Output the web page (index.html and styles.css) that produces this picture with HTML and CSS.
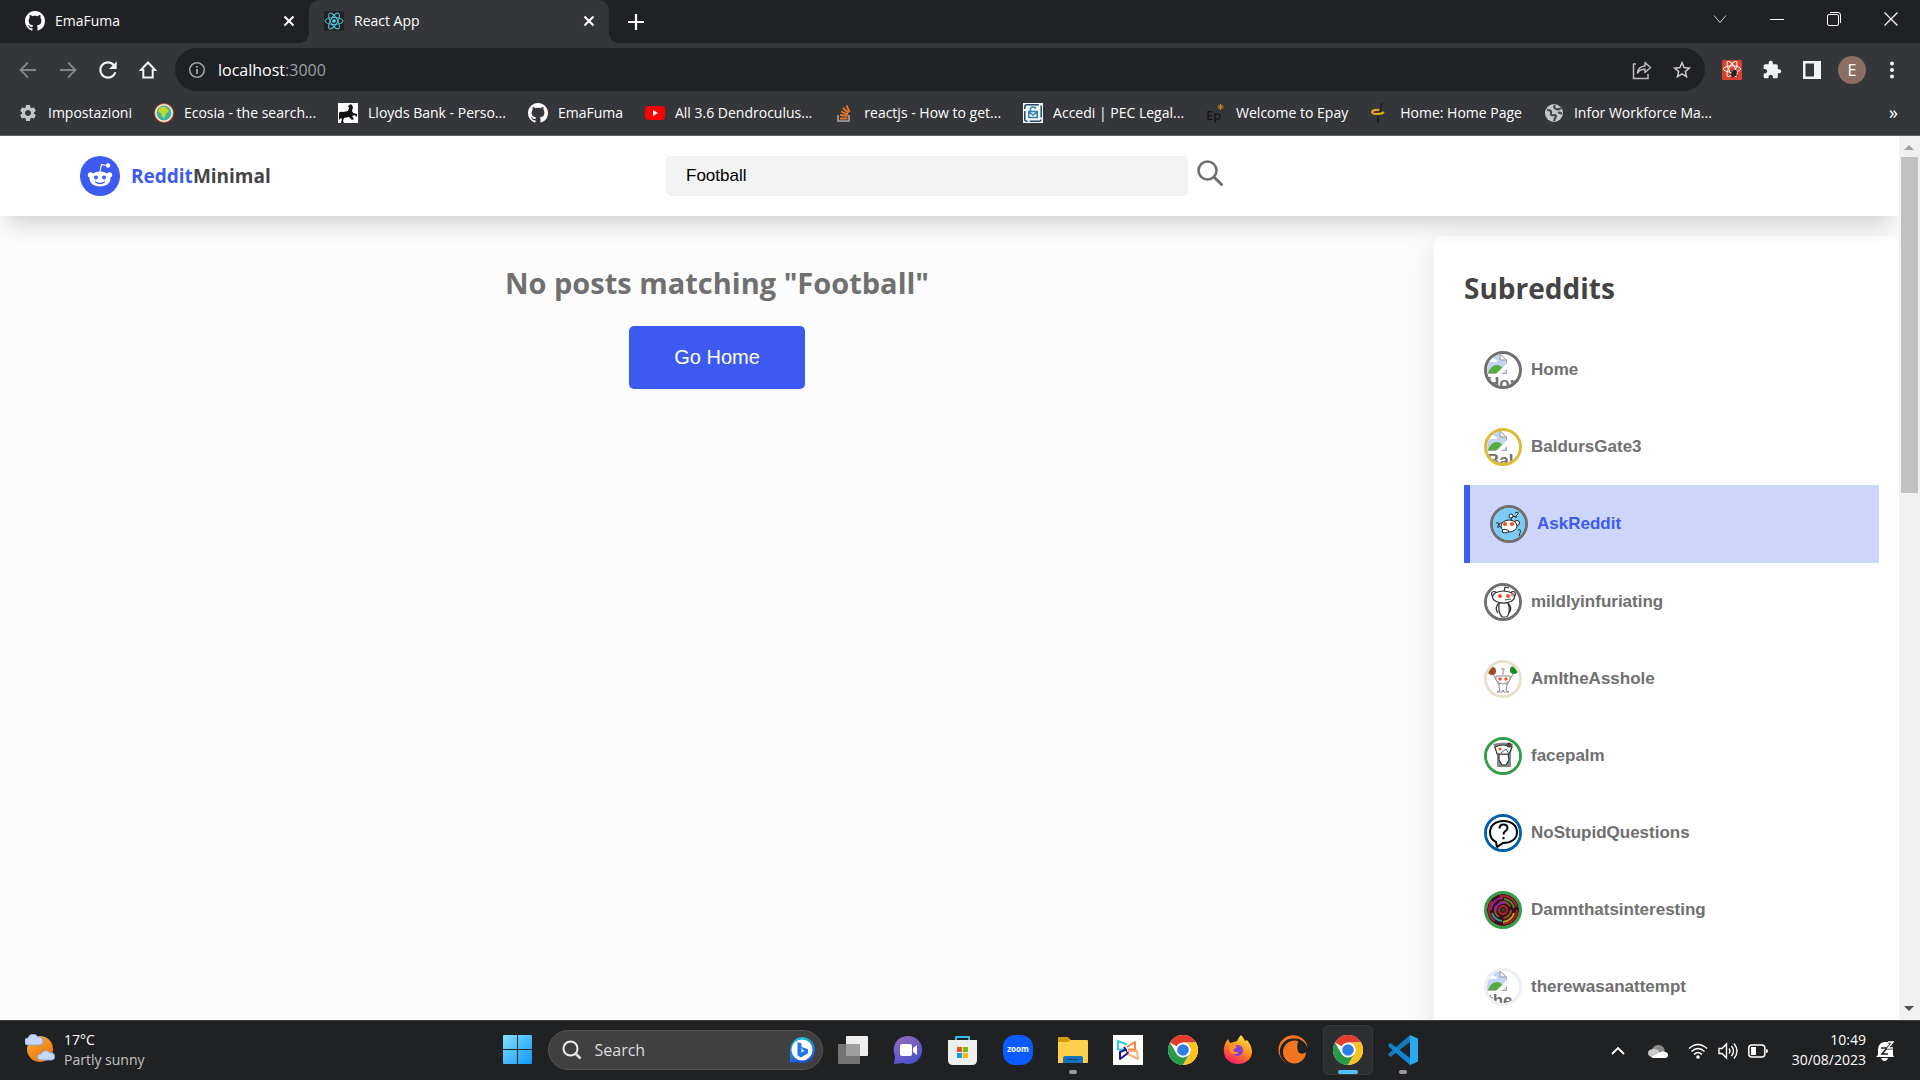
FILE: index.html
```html
<!DOCTYPE html>
<html lang="en">
<head>
<meta charset="utf-8">
<title>React App</title>
<link rel="stylesheet" href="styles.css">
</head>
<body>
<svg class="defs" aria-hidden="true">
  <defs>
    <symbol id="github" viewBox="0 0 16 16"><path fill="#fff" d="M8 0C3.58 0 0 3.58 0 8c0 3.54 2.29 6.53 5.47 7.59.4.07.55-.17.55-.38 0-.19-.01-.82-.01-1.49-2.01.37-2.53-.49-2.69-.94-.09-.23-.48-.94-.82-1.13-.28-.15-.68-.52-.01-.53.63-.01 1.08.58 1.23.82.72 1.21 1.87.87 2.33.66.07-.52.28-.87.51-1.07-1.78-.2-3.64-.89-3.64-3.95 0-.87.31-1.59.82-2.15-.08-.2-.36-1.02.08-2.12 0 0 .67-.21 2.2.82.64-.18 1.32-.27 2-.27.68 0 1.36.09 2 .27 1.53-1.04 2.2-.82 2.2-.82.44 1.1.16 1.92.08 2.12.51.56.82 1.27.82 2.15 0 3.07-1.87 3.75-3.65 3.95.29.25.54.73.54 1.48 0 1.07-.01 1.93-.01 2.2 0 .21.15.46.55.38A8.013 8.013 0 0016 8c0-4.42-3.58-8-8-8z"/></symbol>
    <symbol id="close" viewBox="0 0 12 12"><path d="M1.5 1.5l9 9M10.5 1.5l-9 9" stroke="#fff" stroke-width="2" fill="none"/></symbol>
    <symbol id="chrome" viewBox="0 0 30 30">
      <circle cx="15" cy="15" r="15" fill="#fff"/>
      <path d="M15 15L2 7.5A15 15 0 0 1 28 7.500H15z" fill="#e33b2e"/>
      <path d="M2 7.500A15 15 0 0 0 15 30L21.500 18.750 15 22.500 8.500 18.750z" fill="#289a49"/>
      <path d="M28 7.500A15 15 0 0 1 15 30L21.500 18.750A7.500 7.500 0 0 0 15 7.500z" fill="#fcc31e"/>
      <circle cx="15" cy="15" r="7.500" fill="#fff"/><circle cx="15" cy="15" r="5.800" fill="#2f7de9"/>
    </symbol>
    <symbol id="broken" viewBox="0 0 20 20">
      <path d="M0 0h13l7 6v14H0z" fill="#c3d4f5"/>
      <path d="M2 6q2-4 5-1 3 0 3 3H2z" fill="#fff"/>
      <path d="M1 19q3-8 9-8 4 0 7 5l-3 3z" fill="#54ad3c"/>
      <path d="M0 19.500h20M19.500 6v13.500" fill="none" stroke="#aaa"/>
      <path d="M13 0v6h6.500z" fill="#f4f4f4" stroke="#999"/>
      <path d="M20 9L9 20h5l6-5z" fill="#fff"/>
    </symbol>
  </defs>
</svg>

<div class="screen">
  <header class="browser">
    <div class="tabstrip">
      <div class="tab">
        <svg class="icon20"><use href="#github"/></svg>
        <span class="tab-title">EmaFuma</span>
        <button class="plain" aria-label="Close tab"><svg class="icon12"><use href="#close"/></svg></button>
      </div>
      <div class="tab active">
        <svg class="icon20" viewBox="0 0 20 20"><rect width="20" height="20" rx="2" fill="#222"/><g fill="none" stroke="#4fc3dc"><ellipse cx="10" cy="10" rx="9" ry="3.500"/><ellipse cx="10" cy="10" rx="9" ry="3.500" transform="rotate(60 10 10)"/><ellipse cx="10" cy="10" rx="9" ry="3.500" transform="rotate(120 10 10)"/></g><circle cx="10" cy="10" r="1.800" fill="#61dafb"/></svg>
        <span class="tab-title">React App</span>
        <button class="plain" aria-label="Close tab"><svg class="icon12"><use href="#close"/></svg></button>
      </div>
      <button class="plain new-tab" aria-label="New tab"><svg class="icon16" viewBox="0 0 16 16"><path d="M8 0v16M0 8h16" stroke="#fff" stroke-width="2.200"/></svg></button>
      <div class="window-controls">
        <button class="plain" aria-label="Search tabs"><svg class="icon14" viewBox="0 0 14 14"><path d="M1 3.500l6 7 6-7" fill="none" stroke="#ccc"/></svg></button>
        <button class="plain" aria-label="Minimise"><svg class="icon14" viewBox="0 0 14 14"><path d="M0 7.500h14" stroke="#fff"/></svg></button>
        <button class="plain" aria-label="Restore"><svg class="icon14" viewBox="0 0 14 14"><rect x=".5" y="2.500" width="11" height="11" rx="1.500" fill="none" stroke="#fff"/><path d="M3 .5h8q2.500 0 2.500 2.500v8" fill="none" stroke="#fff"/></svg></button>
        <button class="plain" aria-label="Close"><svg class="icon14" viewBox="0 0 14 14"><path d="M.5.5l13 13M13.500.5l-13 13" stroke="#fff" stroke-width="1.200"/></svg></button>
      </div>
    </div>

    <div class="toolbar">
      <div class="tools">
        <button class="plain" aria-label="Back"><svg class="icon18" viewBox="0 0 18 18"><path d="M17 9H2M9 1.500L1.500 9 9 16.500" fill="none" stroke="#85868a" stroke-width="1.800"/></svg></button>
        <button class="plain" aria-label="Forward"><svg class="icon18" viewBox="0 0 18 18"><path d="M1 9h15M9 1.500L16.500 9 9 16.500" fill="none" stroke="#85868a" stroke-width="1.800"/></svg></button>
        <button class="plain" aria-label="Reload"><svg class="icon26" viewBox="0 0 24 24"><path fill="#f1f3f4" d="M17.650 6.350C16.200 4.900 14.210 4 12 4c-4.420 0-7.990 3.580-7.990 8s3.570 8 7.990 8c3.730 0 6.840-2.550 7.730-6h-2.080c-.82 2.330-3.040 4-5.650 4-3.310 0-6-2.690-6-6s2.690-6 6-6c1.660 0 3.140.69 4.220 1.780L13 11h7V4l-2.350 2.350z"/></svg></button>
        <button class="plain" aria-label="Home page"><svg class="icon18" viewBox="0 0 18 18"><path d="M9 1.500L1.800 9h2.500v7.500h9.400V9h2.500z" fill="none" stroke="#f1f3f4" stroke-width="2"/></svg></button>
      </div>
      <div class="omnibox">
        <svg class="icon18" viewBox="0 0 18 18"><circle cx="9" cy="9" r="7.300" fill="none" stroke="#9aa0a6" stroke-width="1.600"/><path d="M9 8v5M9 5v1.800" stroke="#9aa0a6" stroke-width="1.800"/></svg>
        <span class="url">localhost<span class="port">:3000</span></span>
        <button class="plain" aria-label="Share"><svg class="icon20" viewBox="0 0 20 20"><path d="M4 4H1.500v14.500H16V14" fill="none" stroke="#bbb" stroke-width="1.500"/><path d="M5.500 13Q6 6.500 13 6V2.500l5.500 5L13 12.500V9.200Q8 9 5.500 13z" fill="none" stroke="#bbb" stroke-width="1.500" stroke-linejoin="round"/></svg></button>
        <button class="plain" aria-label="Bookmark"><svg class="icon22" viewBox="0 0 24 24"><path fill="#d0d0d0" d="M22 9.240l-7.190-.62L12 2 9.190 8.630 2 9.240l5.460 4.730L5.820 21 12 17.270 18.180 21l-1.630-7.030L22 9.240zM12 15.400l-3.760 2.270 1-4.280-3.320-2.880 4.380-.38L12 6.100l1.710 4.040 4.380.38-3.320 2.880 1 4.280L12 15.400z"/></svg></button>
      </div>
      <div class="tools">
        <button class="plain" aria-label="React Developer Tools"><svg class="icon20" viewBox="0 0 20 20"><rect width="20" height="20" rx="1" fill="#d9412f"/><g fill="none" stroke="#fff"><ellipse cx="10" cy="9" rx="8.500" ry="3.200"/><ellipse cx="10" cy="9" rx="8.500" ry="3.200" transform="rotate(60 10 9)"/><ellipse cx="10" cy="9" rx="8.500" ry="3.200" transform="rotate(120 10 9)"/></g><ellipse cx="12" cy="13.500" rx="2.500" ry="3.500" fill="#222" transform="rotate(25 12 13.500)"/><path d="M8 11l8 5M8 15l7-4M10 18l4-8" stroke="#222"/></svg></button>
        <button class="plain" aria-label="Extensions"><svg class="icon20" viewBox="0 0 24 24"><path fill="#f1f3f4" d="M20.500 11H19V7c0-1.100-.9-2-2-2h-4V3.500C13 2.120 11.880 1 10.500 1S8 2.120 8 3.500V5H4c-1.100 0-1.990.9-1.990 2v3.800H3.500c1.490 0 2.700 1.210 2.700 2.700s-1.210 2.700-2.700 2.700H2V20c0 1.100.9 2 2 2h3.800v-1.500c0-1.490 1.210-2.700 2.700-2.700 1.490 0 2.700 1.210 2.700 2.700V22H17c1.100 0 2-.9 2-2v-4h1.500c1.380 0 2.500-1.120 2.500-2.500S21.880 11 20.500 11z"/></svg></button>
        <button class="plain" aria-label="Side panel"><svg class="icon18" viewBox="0 0 18 18"><path fill="#f1f3f4" fill-rule="evenodd" d="M0 0h18v18H0zM2.500 2.500v13H11v-13z"/></svg></button>
        <button class="plain" aria-label="Profile"><span class="avatar">E</span></button>
        <button class="plain" aria-label="Menu"><svg class="icon18" viewBox="0 0 18 18"><g fill="#f1f3f4"><circle cx="9" cy="2.500" r="2"/><circle cx="9" cy="9" r="2"/><circle cx="9" cy="15.500" r="2"/></g></svg></button>
      </div>
    </div>

    <nav class="bookmarks">
      <a href="#"><svg class="icon20" viewBox="0 0 24 24"><path fill="#c4c7cc" d="M19.140 12.940c.04-.3.06-.61.06-.94 0-.32-.02-.64-.07-.94l2.030-1.580c.18-.14.23-.41.12-.61l-1.920-3.320c-.12-.22-.37-.29-.59-.22l-2.390.96c-.5-.38-1.030-.7-1.620-.94l-.36-2.540c-.04-.24-.24-.41-.48-.41h-3.840c-.24 0-.43.17-.47.41l-.36 2.540c-.59.24-1.130.57-1.620.94l-2.390-.96c-.22-.08-.47 0-.59.22L2.740 8.870c-.12.21-.08.47.12.61l2.030 1.580c-.05.3-.09.63-.09.94s.02.64.07.94l-2.030 1.580c-.18.14-.23.41-.12.61l1.920 3.320c.12.22.37.29.59.22l2.390-.96c.5.38 1.030.7 1.620.94l.36 2.540c.05.24.24.41.48.41h3.840c.24 0 .44-.17.47-.41l.36-2.540c.59-.24 1.130-.56 1.620-.94l2.390.96c.22.08.47 0 .59-.22l1.920-3.320c.12-.22.07-.47-.12-.61l-2.010-1.580zM12 15.600c-1.980 0-3.600-1.620-3.600-3.600s1.620-3.600 3.600-3.600 3.600 1.620 3.600 3.600-1.620 3.600-3.600 3.600z"/></svg><span>Impostazioni</span></a>
      <a href="#"><svg class="icon20" viewBox="0 0 20 20"><circle cx="10" cy="10" r="9.200" fill="#3bb3a8" stroke="#e2583e" stroke-width="1.200"/><circle cx="10" cy="10" r="8.200" fill="none" stroke="#f6efc9" stroke-width="1.600"/><path d="M5 6q4-4 8-1l2 4-3 1-1 5-3-1-1-4-3-1z" fill="#c6d82f"/></svg><span>Ecosia - the search...</span></a>
      <a href="#"><svg class="icon20" viewBox="0 0 20 20"><rect width="20" height="20" fill="#fff"/><path d="M1 10q1-2 4-1l5-1 1-3-1-2 3-2 2 3-1 4 1 2 4 1v2l-1 1-1-2-3 1 2 3-2 1-3-3-5 1-1 3 1 2H3l1-4-1-1-2 2z" fill="#111"/></svg><span>Lloyds Bank - Perso...</span></a>
      <a href="#"><svg class="icon20"><use href="#github"/></svg><span>EmaFuma</span></a>
      <a href="#"><svg class="icon20" viewBox="0 0 20 20"><rect y="3" width="20" height="14" rx="4" fill="#f00"/><path d="M8 7l5 3-5 3z" fill="#fff"/></svg><span>All 3.6 Dendroculus...</span></a>
      <a href="#"><svg class="icon20" viewBox="0 0 20 20"><path d="M4 12v6h11v-6" fill="none" stroke="#a9a9a9" stroke-width="1.600"/><path d="M6 15.500h7.500M6.200 12l7.300 1M7 8.500l6.800 3M9 5l5.500 5M12.500 2.500l3 6.500" stroke="#e87722" stroke-width="1.800"/></svg><span>reactjs - How to get...</span></a>
      <a href="#"><svg class="icon20" viewBox="0 0 20 20"><rect width="20" height="20" fill="#f3f8fb"/><rect x="1.800" y="1.800" width="16.400" height="16.400" rx="2" fill="none" stroke="#23466b" stroke-width="1.500" stroke-dasharray="12 2"/><path d="M7.500 8V6q0-2 2.500-2t2.500 2M5.800 8.500h8.500v6H5.800zM6 9l4 3 4-3" fill="none" stroke="#2c86ad" stroke-width="1.500"/></svg><span>Accedi | PEC Legal...</span></a>
      <a href="#"><svg class="icon20" viewBox="0 0 20 20"><text class="ep" x="0" y="17">Ep</text><path d="M14.500 1v6M11.500 4h6M12.500 2l4 4M16.500 2l-4 4" stroke="#c98a20"/></svg><span>Welcome to Epay</span></a>
      <a href="#"><svg class="icon20" viewBox="0 0 20 20"><path d="M10 7Q3 6 2 9q0 2 5 2 5 0 7-2" fill="none" stroke="#e5b211" stroke-width="1.800"/><path d="M12 0l-2 9M8 13v7" stroke="#202124" stroke-width="2"/></svg><span>Home: Home Page</span></a>
      <a href="#"><svg class="icon20" viewBox="0 0 20 20"><circle cx="10" cy="10" r="9" fill="#c4c7cc"/><path d="M3 7q5 0 4 3t4 2q2 1 0 3l-1 3M11 2q-2 3 1 4t5-1M14 10q2-1 4 1" fill="none" stroke="#45474b" stroke-width="2.200"/></svg><span>Infor Workforce Ma...</span></a>
      <button class="plain more" aria-label="More bookmarks"><span>»</span></button>
    </nav>
  </header>

  <div class="viewport">
    <div class="page">
      <header class="site-header">
        <a class="brand" href="#">
          <svg class="logo" viewBox="0 0 40 40"><circle cx="20" cy="20" r="20" fill="#3d5af1"/><ellipse cx="20" cy="23" rx="10.500" ry="7.500" fill="#fff"/><circle cx="10.500" cy="19" r="2.700" fill="#fff"/><circle cx="29.500" cy="19" r="2.700" fill="#fff"/><circle cx="28" cy="9.500" r="2.200" fill="#fff"/><path d="M20 16l1.500-7.500 5 1" fill="none" stroke="#fff" stroke-width="1.200"/><circle cx="16" cy="21.500" r="1.900" fill="#3d5af1"/><circle cx="24" cy="21.500" r="1.900" fill="#3d5af1"/><path d="M15.500 26q4.500 3 9 0" fill="none" stroke="#3d5af1" stroke-width="1.300" stroke-linecap="round"/></svg>
          <span><span class="brand-blue">Reddit</span>Minimal</span>
        </a>
        <form class="search">
          <input type="text" value="Football" aria-label="Search posts">
          <button type="button" class="plain" aria-label="Search"><svg class="icon26" viewBox="0 0 26 26"><circle cx="10.500" cy="10.500" r="9" fill="none" stroke="#707070" stroke-width="2.600"/><path d="M17 17l7.500 7.500" stroke="#707070" stroke-width="3" stroke-linecap="round"/></svg></button>
        </form>
      </header>
      <div class="columns">
        <main class="results">
          <h2>No posts matching "Football"</h2>
          <button class="go-home">Go Home</button>
        </main>
        <aside class="subreddits">
          <h2>Subreddits</h2>
          <ul>
            <li><button class="sub"><span class="pic grey"><svg class="icon20"><use href="#broken"/></svg><span>Hor</span></span>Home</button></li>
            <li><button class="sub"><span class="pic gold"><svg class="icon20"><use href="#broken"/></svg><span>Bal</span></span>BaldursGate3</button></li>
            <li><button class="sub selected"><span class="pic grey"><svg class="art" viewBox="0 0 32 32"><rect width="32" height="32" fill="#7dcbf7"/><g fill="#fff" stroke="#222"><path d="M18 12l1-4 4 1" fill="none"/><circle cx="18" cy="8" r="2"/><circle cx="8" cy="17" r="2"/><circle cx="24" cy="15" r="2.500"/><ellipse cx="16" cy="18" rx="8" ry="6"/><path d="M9 24q1-4 5-2l2 1q-2 3-7 1z"/></g><circle cx="12" cy="16" r="2" fill="#f04b23"/><circle cx="19" cy="16" r="2" fill="#f04b23"/><g fill="none" stroke="#222"><path d="M22 5q4-2 3 1l-2 2v2M3 15q4-1 2 3v2M25 22q4-1 2 3l-1 3"/></g></svg></span>AskReddit</button></li>
            <li><button class="sub"><span class="pic grey"><svg class="art" viewBox="0 0 32 32"><rect width="32" height="32" fill="#fff"/><g fill="#fff" stroke="#333" stroke-width="1.200"><path d="M17 6l1-5 4 1" fill="none"/><path d="M12 17q-5 5-1 10M21 17q5 5 1 10M12 17q-1 10 3 14h5q4-6 1-14z"/><circle cx="7" cy="8" r="2.500"/><circle cx="26" cy="8" r="2.500"/><ellipse cx="16.500" cy="11" rx="11" ry="6"/></g><circle cx="13" cy="10" r="1.900" fill="#f04b23"/><circle cx="21" cy="10" r="1.900" fill="#f04b23"/><circle cx="25" cy="9" r="1.600" fill="#f49b91"/><path d="M18 14l6-1" stroke="#555"/></svg></span>mildlyinfuriating</button></li>
            <li><button class="sub"><span class="pic sand"><svg class="art" viewBox="0 0 32 32"><rect width="32" height="32" fill="#fff"/><g fill="#fff" stroke="#888"><path d="M16 12V8q3-3-2-2M6 11l6 11M26 11l-6 11"/><path d="M12 20q0 6 1 7l-3 2h5l1-2 1 2h5l-3-2q1-4 1-7z"/><path d="M9 13h14v4q-7 8-14 0z"/></g><circle cx="5" cy="8" r="4" fill="#9c4d28"/><circle cx="27" cy="7" r="4" fill="#148c23"/><circle cx="13" cy="16" r="1.800" fill="#f05a30"/><circle cx="19" cy="16" r="1.800" fill="#f05a30"/></svg></span>AmItheAsshole</button></li>
            <li><button class="sub"><span class="pic green"><svg class="art" viewBox="0 0 32 32"><rect width="32" height="32" fill="#fff"/><path d="M6 4q10-3 20 0l-2 9v14H10V13z" fill="#888"/><g fill="#fff" stroke="#333" stroke-width="1.200"><path d="M12 14h9l1 6-3 5h-4l-3-5z"/><path d="M8 7q8-4 17 0l-3 7H10z"/></g><circle cx="13" cy="9" r="1.600" fill="#f05a30"/><circle cx="22" cy="5" r="2.500" fill="#444"/><path d="M14 13l5-4 3 5" fill="none" stroke="#555"/></svg></span>facepalm</button></li>
            <li><button class="sub"><span class="pic blue"><svg class="art" viewBox="0 0 32 32"><rect width="32" height="32" fill="#fff"/><path d="M9 25Q3 22 3 15.500C3 9 8 4 16.500 4S30 9 30 15.500 24 26 16 26l-6 4z" fill="#fff" stroke="#000" stroke-width="2"/><path d="M12.500 11.500q0-4 4-4t4 3.500q0 2-2.500 3.500-1.500 1-1.500 3M16.500 20v2.200" fill="none" stroke="#000" stroke-width="2"/></svg></span>NoStupidQuestions</button></li>
            <li><button class="sub"><span class="pic green"><svg class="art" viewBox="0 0 32 32"><rect width="32" height="32" fill="#37101c"/><g fill="none" stroke-width="2"><circle cx="16" cy="16" r="14" stroke="#a82424" stroke-dasharray="22 9"/><path d="M4 16a12 12 0 0 1 12-12" stroke="#a3208a"/><path d="M17 5a11 11 0 0 1 10 9" stroke="#3f8d25"/><path d="M27 19a12 12 0 0 1-11 9" stroke="#c7a51d"/><path d="M5 19a12 12 0 0 0 10 8" stroke="#1aa3a8"/><circle cx="16" cy="16" r="8" stroke="#8d5a16" stroke-dasharray="12 5"/><path d="M9 17a7 7 0 0 1 9-8" stroke="#8326b0"/><circle cx="16" cy="16" r="4" stroke="#b3222e"/></g><circle cx="16" cy="16" r="2" fill="#254c22"/></svg></span>Damnthatsinteresting</button></li>
            <li><button class="sub"><span class="pic pale"><svg class="icon20"><use href="#broken"/></svg><span>the</span></span>therewasanattempt</button></li>
          </ul>
        </aside>
      </div>
    </div>
    <div class="scrollbar">
      <svg class="arrow" viewBox="0 0 20 20"><path d="M5 14l5-5 5 5z" fill="#a3a3a3"/></svg>
      <div class="thumb"></div>
      <svg class="arrow" viewBox="0 0 20 20"><path d="M5 6l5 5 5-5z" fill="#505050"/></svg>
    </div>
  </div>

  <footer class="taskbar">
    <div class="weather">
      <svg class="icon30" viewBox="0 0 30 30"><defs><linearGradient id="sun" x2="0.6" y2="1"><stop stop-color="#f5b82e"/><stop offset="1" stop-color="#f0700f"/></linearGradient></defs><circle cx="15" cy="15" r="13" fill="url(#sun)"/><path d="M3 11a3.500 3.500 0 0 1 0-7 5.500 5.500 0 0 1 10-1 4 4 0 0 1 2 8z" fill="#c9d7f8" stroke="#8aa4e3"/><path d="M15 26a3 3 0 0 1 1-6 5 5 0 0 1 9-1 3.500 3.500 0 0 1 2 7z" fill="#c9d7f8" stroke="#8aa4e3"/></svg>
      <div class="lines"><div>17°C</div><div class="dim">Partly sunny</div></div>
    </div>
    <div class="apps">
      <button class="plain app" aria-label="Start"><svg class="icon30" viewBox="0 0 30 30"><defs><linearGradient id="win" x2="1" y2="1"><stop stop-color="#84e0ff"/><stop offset="1" stop-color="#0f97f6"/></linearGradient></defs><path fill="url(#win)" d="M0 1q0-1 1-1h13v14H0zM15 0h13q1 0 1 1v13H15zM0 15h14v14H1q-1 0-1-1zM15 15h14v13q0 1-1 1H15z"/></svg></button>
      <button class="plain task-search"><svg class="icon20" viewBox="0 0 20 20"><circle cx="8.500" cy="8.500" r="7" fill="none" stroke="#eee" stroke-width="2"/><path d="M13.500 13.500l5 5" stroke="#ddd" stroke-width="2.600"/></svg><span>Search</span><svg class="icon26" viewBox="0 0 26 26"><defs><linearGradient id="bing" x2="0.300" y2="1"><stop stop-color="#22c9dc"/><stop offset="1" stop-color="#1a55d8"/></linearGradient></defs><path d="M13 0a13 13 0 1 1-5 25l-7 1V14A13 13 0 0 1 13 0z" fill="url(#bing)"/><circle cx="13" cy="13" r="10.500" fill="#fff"/><path d="M8.500 5l4 1.500v9l3-1.800-2-1-1-3 6.500 2.500v4L12 20.500l-3.500-2z" fill="#2277e8"/></svg></button>
      <button class="plain app" aria-label="Task view"><svg class="icon30" viewBox="0 0 30 30"><rect x="8" y="1" width="22" height="20" rx="1" fill="#eee"/><rect y="9" width="22" height="20" rx="1" fill="#8a8a8a" opacity=".8"/></svg></button>
      <button class="plain app" aria-label="Chat"><svg class="icon30" viewBox="0 0 30 30"><defs><linearGradient id="chat" x2="0.500" y2="1"><stop stop-color="#9b6bbf"/><stop offset="1" stop-color="#4b53c8"/></linearGradient></defs><path d="M15 1a14 14 0 1 1-5 27l-9 1 1-8A14 14 0 0 1 15 1z" fill="url(#chat)"/><rect x="7" y="9" width="12" height="12" rx="2" fill="#fff"/><path d="M20 13l4-3v10l-4-3z" fill="#fff"/></svg></button>
      <button class="plain app" aria-label="Store"><svg class="icon30" viewBox="0 0 30 30"><path d="M8 7V2h13v5" fill="none" stroke="#34b8e8" stroke-width="2"/><path d="M0 5h29v20q0 5-5 5H5q-5 0-5-5z" fill="#efefef"/><path d="M9 12h5v5H9z" fill="#f04f23"/><path d="M15 12h5v5h-5z" fill="#7fb900"/><path d="M9 18h5v5H9z" fill="#00a3ee"/><path d="M15 18h5v5h-5z" fill="#feb800"/></svg></button>
      <button class="plain app" aria-label="Zoom"><svg class="icon30" viewBox="0 0 30 30"><rect width="30" height="30" rx="12" fill="#0b5cff"/><text class="zoom-word" x="15" y="17" text-anchor="middle">zoom</text></svg></button>
      <button class="plain app running" aria-label="File Explorer"><svg class="icon30" viewBox="0 0 30 30"><path d="M0 3q0-1 1-1h9l3 3h-1v5H0z" fill="#d99a07"/><path d="M0 7h10l2-2h17q1 0 1 1v21q0 1-1 1H0z" fill="#fdcf4a"/><path d="M5 28v-5q0-2 2-2h16q2 0 2 2v5z" fill="#1272c0"/><path d="M9 24.500h12" stroke="#0b4a80"/></svg></button>
      <button class="plain app" aria-label="Capture"><svg class="icon30" viewBox="0 0 30 30"><rect width="30" height="30" fill="#fff"/><g fill="none" stroke-width="2" stroke-linejoin="round"><path d="M14 14.500H5V6l9 3.500" stroke="#2bd3df"/><path d="M14 12l8-5v7.500h-7" stroke="#f58a3c"/><path d="M12 15l-5 2v7l8-6-4-6" stroke="#1a1a8c"/><path d="M14 16h10l1 8-10-5" stroke="#f9b277"/></g></svg></button>
      <button class="plain app" aria-label="Chrome"><svg class="icon30"><use href="#chrome"/></svg></button>
      <button class="plain app" aria-label="Firefox"><svg class="icon30" viewBox="0 0 30 30"><defs><linearGradient id="fox" x1="0.800" x2="0.300" y2="1"><stop stop-color="#fff14a"/><stop offset=".5" stop-color="#ff8c1e"/><stop offset="1" stop-color="#f5156c"/></linearGradient></defs><path d="M18 0q3 3 4 6l2-1q5 6 5 12a14 12 0 0 1-28 0Q0 10 5 4l2 4 4-1 3-1q2-4 4-6z" fill="url(#fox)"/><circle cx="14.500" cy="15.500" r="5.500" fill="#8440d8"/><path d="M6 10q5-1 8 2-2 1-4 3 2 3 6 2-3 4-8 1-3-4-2-8z" fill="#ff9420"/></svg></button>
      <button class="plain app" aria-label="Crunchyroll"><svg class="icon30" viewBox="0 0 30 30"><path d="M14 29.500A14.700 14.700 0 1 1 29.700 13q-4-10-14-9.500A12 12 0 0 0 14 29.500z" fill="#f47521"/><path d="M20 6a11.500 11.500 0 1 0 8 11q-3 3-6.500 1T20 6z" fill="#f47521"/></svg></button>
      <button class="plain app current" aria-label="Chrome, running"><svg class="icon30"><use href="#chrome"/></svg></button>
      <button class="plain app running" aria-label="Visual Studio Code"><svg class="icon30" viewBox="0 0 30 30"><path d="M22 7L2.500 22 .5 20.500v-2L22 0z" fill="#1479bd"/><path d="M22 23L2.500 8 .5 9.500v2L22 30z" fill="#1186cf"/><path d="M22 0l8 3.500v23L22 30z" fill="#2aa9f1"/></svg></button>
    </div>
    <div class="tray">
      <button class="plain tray-item" aria-label="Hidden icons"><svg class="icon14" viewBox="0 0 14 14"><path d="M1 10l6-6 6 6" fill="none" stroke="#fff" stroke-width="1.800"/></svg></button>
      <button class="plain tray-item" aria-label="OneDrive"><svg class="icon20" viewBox="0 0 20 20"><path d="M4 10Q5 3 11 4q5 0 6 7z" fill="#8b8b8b"/><path d="M4 16q-4-1-4-4t4-4q4-1 7 2l5 6z" fill="#c8c8c8"/><path d="M3 16l8-4q3-3 6-1 3 0 3 3 0 3-3 3H5z" fill="#fff"/></svg></button>
      <button class="plain system" aria-label="Network, volume and battery">
        <svg class="icon20" viewBox="0 0 20 20"><g fill="none" stroke="#fff" stroke-width="1.500"><path d="M1 7.500q9-8 18 0M3.500 10.500q6.500-6 13 0M6 13.500q4-4 8 0"/></g><circle cx="10" cy="16" r="1.800" fill="#fff"/></svg>
        <svg class="icon20" viewBox="0 0 20 20"><g fill="none" stroke="#fff" stroke-width="1.400"><path d="M1 7.500h3L8.500 3v14L4 12.500H1zM11 7.500q2 2.500 0 5M13.500 5q4 5 0 10M16 2.500q6 7.500 0 15"/></g></svg>
        <svg class="icon20" viewBox="0 0 20 20"><rect x=".8" y="4" width="16" height="12" rx="3" fill="none" stroke="#fff" stroke-width="1.500"/><path d="M3 6h5v8H3zM18 8q2 0 2 2t-2 2z" fill="#fff"/></svg>
      </button>
      <div class="clock lines"><div>10:49</div><div>30/08/2023</div></div>
      <svg class="icon20" viewBox="0 0 20 20"><path d="M0 16l2-2V8q1-7 7-7h5v3l3 3v7l1 2zM5 17h7q-1 3-3.500 3T5 17z" fill="#fff"/><path d="M5 7h6l-5 6h6" fill="none" stroke="#202124" stroke-width="1.600"/><path d="M12 1h5l-5 6h5" fill="none" stroke="#202124" stroke-width="3"/><path d="M12 1h5l-5 6h5" fill="none" stroke="#fff" stroke-width="1.400"/></svg>
    </div>
  </footer>
</div>
</body>
</html>
```
FILE: styles.css
```css
* { box-sizing: border-box; }

body {
  margin: 0;
  font-family: "Open Sans", "Noto Sans", sans-serif;
  font-size: 14px;
}

svg { display: block; flex: none; }
.defs { position: absolute; width: 0; height: 0; }

.icon12 { width: 12px; height: 12px; }
.icon14 { width: 14px; height: 14px; }
.icon16 { width: 16px; height: 16px; }
.icon18 { width: 18px; height: 18px; }
.icon20 { width: 20px; height: 20px; }
.icon22 { width: 22px; height: 22px; }
.icon26 { width: 26px; height: 26px; }
.icon30 { width: 30px; height: 30px; }

.plain {
  display: flex;
  align-items: center;
  justify-content: center;
  padding: 0;
  border: 0;
  background: none;
  color: inherit;
  font: inherit;
}

.screen {
  display: flex;
  flex-direction: column;
  height: 100vh;
  overflow: hidden;
}

/* Browser window */
.browser {
  flex: none;
  background: #35363a;
  border-bottom: 1px solid #5f6063;
  color: #fff;
}

.tabstrip {
  display: flex;
  height: 43px;
  padding-left: 9px;
  background: #202124;
}

.tab {
  position: relative;
  display: flex;
  align-items: center;
  gap: 10px;
  width: 300px;
  padding: 0 14px 1px 16px;
}

.tab.active {
  padding-left: 15px;
  background: #35363a;
  border-radius: 10px 10px 0 0;
}

.tab.active::before,
.tab.active::after {
  content: "";
  position: absolute;
  bottom: 0;
  width: 10px;
  height: 10px;
}

.tab.active::before {
  right: 100%;
  background: radial-gradient(circle at 0 0, transparent 10px, #35363a 10px);
}

.tab.active::after {
  left: 100%;
  background: radial-gradient(circle at 100% 0, transparent 10px, #35363a 10px);
}

.tab-title { flex: 1; padding-bottom: 1px; }

.new-tab { width: 54px; }

.window-controls {
  display: flex;
  height: 37px;
  margin: 0 1px 0 auto;
}

.window-controls .plain { width: 57px; }

.toolbar {
  display: flex;
  align-items: center;
  gap: 7px;
  height: 53px;
  padding: 0 8px;
}

.tools { display: flex; }
.tools .plain { width: 40px; height: 40px; }

.omnibox {
  display: flex;
  flex: 1;
  align-items: center;
  height: 43px;
  padding: 0 3px 0 13px;
  border-radius: 22px;
  background: #202124;
}

.omnibox .plain { width: 40px; }

.url {
  flex: 1;
  margin-left: 12px;
  font-size: 16px;
}

.port { color: #9aa0a6; }

.avatar {
  width: 28px;
  height: 28px;
  border-radius: 50%;
  background: #8d6e63;
  font-size: 16px;
  line-height: 28px;
  text-align: center;
}

.bookmarks {
  display: flex;
  align-items: center;
  gap: 22px;
  height: 39px;
  padding: 0 18px 5px;
}

.bookmarks a {
  display: flex;
  align-items: center;
  gap: 10px;
  color: #fff;
  text-decoration: none;
  white-space: nowrap;
}

.bookmarks span { padding-bottom: 2px; }

.more { margin-left: auto; font-size: 18px; }
.more span { margin-right: 4px; }

.ep { font-size: 13px; font-weight: 600; fill: #17181a; }

/* Web page */
.viewport {
  display: flex;
  flex: 1;
  min-height: 0;
  overflow: hidden;
}

.page {
  flex: 1;
  min-width: 0;
  overflow: hidden;
  background: #fcfcfc;
}

.site-header {
  position: relative;
  display: grid;
  grid-template-columns: 1fr 557px 1fr;
  align-items: center;
  height: 80px;
  padding: 0 90px 0 80px;
  background: #fff;
  box-shadow: 0 14px 24px -8px rgba(0, 0, 0, .2);
}

.brand {
  display: flex;
  align-items: center;
  gap: 11px;
  color: #444;
  font-size: 19px;
  font-weight: 700;
  text-decoration: none;
}

.logo { width: 40px; height: 40px; }
.brand-blue { color: #3d5af1; }

.search { display: flex; gap: 9px; }

.search input {
  flex: 1;
  min-width: 0;
  height: 40px;
  padding: 0 20px;
  border: 0;
  border-radius: 5px;
  background: #f3f3f3;
  color: #000;
  font-family: "Liberation Sans", Arial, sans-serif;
  font-size: 17px;
}

.search .plain { height: 34px; }

.columns {
  display: grid;
  grid-template-columns: minmax(0, 1fr) 465px;
  padding-top: 20px;
}

.results {
  display: flex;
  flex-direction: column;
  align-items: center;
  gap: 23px;
  padding-top: 27px;
}

h2 {
  margin: 0;
  line-height: 40px;
  font-weight: 700;
}

.results h2 { color: #707070; font-size: 29px; }

.go-home {
  padding: 20px 45px;
  border: 0;
  border-radius: 5px;
  background: #3d5af1;
  color: #fff;
  font-family: "Liberation Sans", Arial, sans-serif;
  font-size: 20px;
}

.subreddits {
  padding: 32px 20px 30px 30px;
  border-radius: 8px;
  background: #fff;
  box-shadow: 0 10px 30px rgba(0, 0, 0, .1);
}

.subreddits h2 { color: #444; font-size: 28px; }

.subreddits ul {
  margin: 23px 0 0;
  padding: 0;
  list-style: none;
}

.sub {
  display: flex;
  align-items: center;
  gap: 9px;
  width: 100%;
  height: 77px;
  padding: 0 20px;
  border: 0;
  background: none;
  color: #707070;
  font-family: "Liberation Sans", Arial, sans-serif;
  font-size: 17px;
  font-weight: 700;
  text-align: left;
}

.sub.selected {
  height: 78px;
  border-left: 6px solid #3d5af1;
  background: #ced6fb;
  color: #3d5af1;
}

.pic {
  flex: none;
  width: 38px;
  height: 38px;
  overflow: hidden;
  border: 3px solid;
  border-radius: 50%;
  line-height: 20px;
}

.pic span { color: #707070; }
.pic .art { width: 32px; height: 32px; }
.grey { border-color: #707070; }
.gold { border-color: #ddbd37; }
.sand { border-color: #eadfcb; }
.green { border-color: #349e48; }
.blue { border-color: #0060ad; }
.pale { border-color: #edeff1; }

.scrollbar {
  display: flex;
  flex-direction: column;
  flex: none;
  width: 21px;
  background: #f1f1f1;
}

.arrow { width: 20px; height: 20px; }

.thumb {
  height: 38%;
  margin: 1px 2px auto;
  background: #c1c1c1;
}

/* Windows taskbar */
.taskbar {
  display: grid;
  grid-template-columns: 1fr auto 1fr;
  flex: none;
  align-items: center;
  height: 60px;
  border-top: 1px solid #3c4043;
  background: #202122;
  color: #fff;
  line-height: 20px;
}

.lines { padding-bottom: 2px; }

.weather {
  display: flex;
  gap: 9px;
  padding-left: 25px;
}

.weather .icon30 { margin-top: 4px; }
.dim { color: #c4c4c4; }

.apps {
  display: flex;
  align-items: center;
  gap: 5px;
  padding-bottom: 1px;
}

.app {
  position: relative;
  width: 50px;
  height: 50px;
  border: 1px solid transparent;
  border-radius: 6px;
}

.app.current { border-color: #38393b; background: #2d2e30; }

.app.running::after,
.app.current::after {
  content: "";
  position: absolute;
  bottom: 0;
  width: 8px;
  height: 4px;
  border-radius: 2px;
  background: #9b9b9b;
}

.app.current::after { width: 20px; background: #4cc2ff; }

.task-search {
  gap: 13px;
  width: 275px;
  height: 40px;
  padding: 0 7px 0 13px;
  border: 1px solid #545455;
  border-radius: 20px;
  background: #404041;
  color: #ddd;
  font-size: 16px;
}

.task-search span { flex: 1; text-align: left; }

.zoom-word { fill: #fff; font-size: 8px; font-weight: 700; }

.tray {
  display: flex;
  align-items: center;
  justify-content: flex-end;
  padding-right: 24px;
}

.tray-item { width: 40px; height: 40px; }

.system {
  gap: 10px;
  padding: 0 10px;
}

.clock {
  width: 88px;
  margin-right: 10px;
  text-align: right;
}
```
